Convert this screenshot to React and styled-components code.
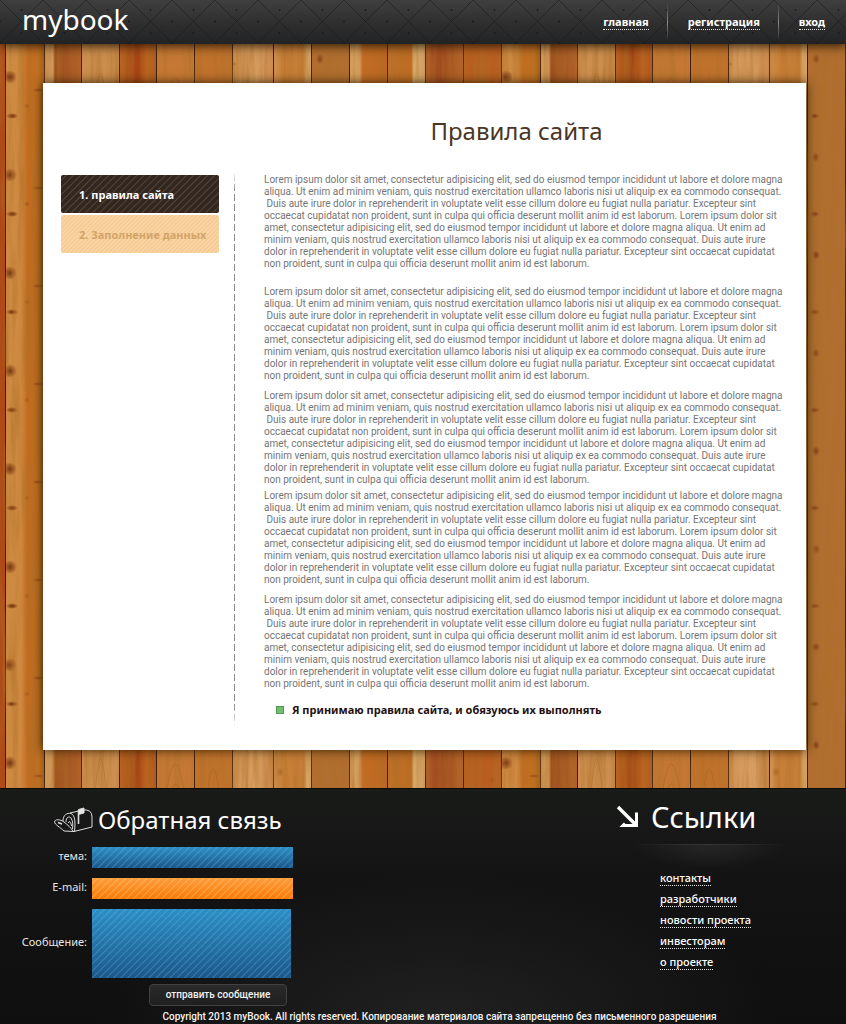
import React from "react";
import styled, { createGlobalStyle } from "styled-components";

const GlobalStyle = createGlobalStyle`
  * { box-sizing: border-box; }
  body {
    margin: 0;
    background: #111212;
    font-family: "Noto Sans", "Open Sans", sans-serif;
    font-size: 11px;
  }
`;

const Page = styled.div`
  display: flex;
  flex-direction: column;
  min-height: 100vh;
`;

const Backdrop = styled.svg`
  position: absolute;
  inset: 0;
  width: 100%;
  height: 100%;
  z-index: -1;
`;

/* ---------- header ---------- */

const Header = styled.header`
  position: relative;
  z-index: 2;
  isolation: isolate;
  display: flex;
  justify-content: space-between;
  align-items: center;
  height: 44px;
  padding: 0 21px 0 22px;
  background: linear-gradient(#403f40, #2e2e2f 55%, #222324);
  box-shadow: 0 2px 10px rgba(20, 10, 0, 0.85);
`;

const Logo = styled.a`
  color: #fff;
  font-size: 28px;
  line-height: 36px;
  padding-bottom: 6px;
  text-decoration: none;
`;

const Nav = styled.nav`
  display: flex;
  align-items: center;
`;

const NavDivider = styled.span`
  width: 1px;
  height: 38px;
  margin: 0 20px 0 18px;
  background: linear-gradient(transparent, #8a8a8a 50%, transparent);
`;

const DottedLink = styled.a`
  display: inline-block;
  color: #fff;
  font-weight: ${(p) => (p.$bold ? 700 : 500)};
  line-height: 14px;
  text-decoration: none;
  border-bottom: 1px dotted #e4e4e4;
`;

/* ---------- content ---------- */

const Main = styled.main`
  position: relative;
  isolation: isolate;
  flex: 1;
  padding: 39px 40px 37px 43px;
`;

const Paper = styled.section`
  display: grid;
  grid-template-columns: 158px 1px 1fr;
  column-gap: 15px;
  padding: 31px 18px 22px;
  background: #fff;
  box-shadow: 0 0 10px rgba(40, 22, 0, 0.9);
`;

const Title = styled.h1`
  grid-column: 3;
  margin: 0 0 23px;
  padding-right: 5px;
  color: #4b3626;
  font-size: 24px;
  font-weight: 400;
  line-height: 34px;
  text-align: center;
`;

const Steps = styled.nav`
  grid-column: 1;
  display: flex;
  flex-direction: column;
  gap: 2px;
  padding-top: 4px;
`;

const Step = styled.a`
  display: flex;
  align-items: center;
  height: 38px;
  padding: 0 0 0 18px;
  border-radius: 2px;
  font-weight: 700;
  text-decoration: none;
  color: ${(p) => (p.$active ? "#fff" : "#d3a468")};
  background: ${(p) =>
    p.$active
      ? "repeating-linear-gradient(135deg, #33261f 0 3px, #53463c 4px, #33261f 5px)"
      : "repeating-linear-gradient(135deg, #f6cb94 0 1px, #fad9ad 2px, #f6cb94 3px)"};
`;

const DashedRule = styled.div`
  grid-column: 2;
  background: repeating-linear-gradient(transparent 0 3px, #8b8b8b 3px 10px);
  mask-image: linear-gradient(transparent, #000 20px calc(100% - 24px), transparent);
`;

const Rules = styled.div`
  grid-column: 3;
  padding: 3px 0 10px 14px;
`;

const Paragraph = styled.p`
  margin: 0 0 ${(p) => p.$gap}px;
  color: #757575;
  font-family: Roboto, "Liberation Sans", sans-serif;
  font-size: 10px;
  line-height: 12px;
  white-space: pre;
`;

const Agree = styled.label`
  display: flex;
  align-items: center;
  gap: 8px;
  padding-left: 12px;
  color: #24100f;
  font-weight: 700;
  line-height: 16px;
`;

const AgreeBox = styled.input`
  appearance: none;
  width: 8px;
  height: 8px;
  margin: 0;
  background: #6fbd6f;
  border: 1px solid #559657;
`;

/* ---------- footer ---------- */

const Footer = styled.footer`
  position: relative;
  padding: 16px 0 0;
  color: #e6e6e6;
  background:
    radial-gradient(ellipse 340px 150px at 52% 100%, #212121, transparent),
    linear-gradient(#191b19, #131313 40%, #0f0f0f);
  border-top: 1px solid #0b0c0b;
`;

const FooterColumns = styled.div`
  display: flex;
  justify-content: space-between;
`;

const FeedbackForm = styled.form`
  width: 293px;
`;

const FeedbackTitle = styled.h2`
  display: flex;
  align-items: center;
  gap: 4px;
  margin: 0 0 12px;
  padding-left: 54px;
  color: #fff;
  font-size: 24px;
  font-weight: 400;
  line-height: 30px;
  white-space: nowrap;
`;

const Fields = styled.div`
  display: grid;
  grid-template-columns: 87px 1fr;
  align-items: center;
  gap: 10px 5px;
`;

const FieldLabel = styled.label`
  padding-bottom: 4px;
  text-align: right;
  line-height: 16px;
`;

const blueFill = `
  repeating-linear-gradient(135deg, transparent 0 3px, rgba(130, 200, 235, 0.3) 4px, transparent 5px),
  linear-gradient(#2d8fc6, #1b588a)`;
const orangeFill = `
  repeating-linear-gradient(135deg, transparent 0 3px, rgba(255, 215, 150, 0.4) 4px, transparent 5px),
  linear-gradient(#ff9d3c, #fb7a06)`;

const Field = styled.input`
  width: 100%;
  height: 21px;
  padding: 0 6px;
  border: 0;
  color: #fff;
  font: inherit;
  background: ${(p) => (p.$tone === "orange" ? orangeFill : blueFill)};
`;

const MessageField = styled(Field)`
  display: block;
  width: calc(100% - 2px);
  height: 69px;
  padding: 6px;
  resize: none;
`;

const SubmitButton = styled.button`
  display: block;
  width: 138px;
  height: 22px;
  margin: 6px 6px 0 auto;
  padding: 0;
  color: #f2f2f2;
  font: 500 10px/16px Roboto, "Liberation Sans", sans-serif;
  background: linear-gradient(#2a2a2b, #1f1f20);
  border: 1px solid #424244;
  border-radius: 4px;
`;

const LinksColumn = styled.section`
  width: 230px;
`;

const LinksTitle = styled.h2`
  display: flex;
  align-items: center;
  gap: 11px;
  margin: 0;
  color: #fff;
  font-size: 29px;
  font-weight: 400;
  line-height: 22px;
`;

const Glow = styled.div`
  width: 152px;
  height: 24px;
  margin: 15px 0 0 17px;
  background:
    linear-gradient(90deg, transparent, #363636 50%, transparent) top / 100% 1px no-repeat,
    radial-gradient(ellipse 50% 100% at 50% 0, #272727, transparent);
`;

const LinkList = styled.ul`
  margin: 0;
  padding: 0 0 0 44px;
  list-style: none;
`;

const LinkItem = styled.li`
  display: flex;
  align-items: center;
  height: 21px;
`;

const Copyright = styled.p`
  margin: 4px 0 0;
  padding-left: 33px;
  color: #f2f2f2;
  font: 500 10px/14px Roboto, "Liberation Sans", sans-serif;
  text-align: center;
`;

/* ---------- drawings ---------- */

/* x, width, gradient id or colour */
const planks = [
  [0, 39, "url(#knotty)"],
  [39, 37, "url(#lightLeftDark)"],
  [76, 38, "#cd8f50"],
  [114, 37, "url(#redwood)"],
  [151, 38, "#c47834"],
  [189, 38, "#c0722c"],
  [227, 41, "url(#pale)"],
  [268, 38, "url(#lightRight)"],
  [306, 38, "#b06e30"],
  [344, 38, "url(#lightLeft)"],
  [382, 38, "url(#stripeRight)"],
  [420, 38, "url(#umber)"],
  [458, 38, "#b85e20"],
];

/* x, y, rx, ry, opacity */
const knots = [
  [5, 33, 7, 7, 0.8],
  [7, 72, 6, 3, 0.9],
  [33, 46, 6, 2, 0.5],
  [22, 62, 3, 3, 0.3],
  [147, 60, 2, 4, 0.3],
  [229, 20, 3, 2, 0.3],
  [275, 42, 4, 5, 0.3],
  [315, 15, 4, 5, 0.6],
  [314, 72, 5, 3, 0.6],
  [487, 50, 2, 3, 0.3],
];

function Gradient({ id, stops }) {
  return (
    <linearGradient id={id}>
      {stops.map(([offset, color]) => (
        <stop key={offset} offset={offset} stopColor={color} />
      ))}
    </linearGradient>
  );
}

function WoodBackdrop() {
  return (
    <Backdrop aria-hidden="true">
      <defs>
        <Gradient id="knotty" stops={[[0, "#cd8a44"], [0.4, "#cf8a40"], [0.58, "#c26c22"], [0.85, "#c0701f"], [1, "#a35c1a"]]} />
        <Gradient id="lightLeftDark" stops={[[0, "#cf985a"], [0.24, "#cf985a"], [0.3, "#9c4f1d"], [1, "#b0602a"]]} />
        <Gradient id="redwood" stops={[[0, "#b96521"], [0.5, "#a54414"], [0.75, "#bb6320"], [1, "#ad5a1f"]]} />
        <Gradient id="pale" stops={[[0, "#cc8e50"], [0.5, "#daa266"], [1, "#cc8a4e"]]} />
        <Gradient id="lightRight" stops={[[0, "#d49555"], [0.3, "#c87e35"], [0.8, "#c67e38"], [0.9, "#daa868"], [1, "#d6a468"]]} />
        <Gradient id="lightLeft" stops={[[0, "#d39e5c"], [0.28, "#d39e5c"], [0.36, "#c26c24"], [1, "#be6720"]]} />
        <Gradient id="stripeRight" stops={[[0, "#be702a"], [0.64, "#be6c22"], [0.7, "#d8aa68"], [1, "#d0a064"]]} />
        <Gradient id="umber" stops={[[0, "#ac582a"], [0.4, "#a04a1e"], [1, "#b3602a"]]} />
        <radialGradient id="knot">
          <stop offset="0" stopColor="#5a2008" />
          <stop offset="0.5" stopColor="#7c3410" stopOpacity="0.7" />
          <stop offset="1" stopColor="#7c3410" stopOpacity="0" />
        </radialGradient>
        <pattern id="wood" x="5" y="0" width="496" height="98" patternUnits="userSpaceOnUse">
          {planks.map(([x, width, fill]) => (
            <rect key={x} x={x} width={width} height="98" fill={fill} />
          ))}
          <path
            d="M157 98Q170 -30 184 98M161 98Q170 10 180 98M165 98Q170 40 176 98M88 98Q95 -40 104 98M92 98Q96 20 100 98M199 98Q208 -20 218 98"
            fill="none"
            stroke="#8f4c18"
            strokeOpacity="0.3"
          />
          {knots.map(([x, y, rx, ry, opacity]) => (
            <ellipse key={`${x}-${y}`} cx={x} cy={y} rx={rx} ry={ry} fill="url(#knot)" opacity={opacity} />
          ))}
          {planks.map(([x]) => (
            <rect key={x} x={x} width="1" height="98" fill="#3d1e0a" />
          ))}
        </pattern>
        <filter id="grain" x="0" y="0" width="100%" height="100%">
          <feTurbulence type="fractalNoise" baseFrequency="0.16 0.012" numOctaves="3" seed="4" />
          <feColorMatrix values="0 0 0 0 0.42  0 0 0 0 0.16  0 0 0 0 0.02  1.2 0 0 0 -0.45" />
        </filter>
      </defs>
      <rect width="100%" height="100%" fill="url(#wood)" />
      <rect width="5" height="100%" fill="#a93c10" fillOpacity="0.6" />
      <rect width="100%" height="100%" filter="url(#grain)" />
    </Backdrop>
  );
}

function HeaderBackdrop() {
  return (
    <Backdrop aria-hidden="true">
      <defs>
        <pattern id="lattice" width="43" height="43" patternUnits="userSpaceOnUse">
          <path d="M0 0L43 43M43 0L0 43" stroke="#1a1a1b" strokeOpacity="0.6" />
          <g fill="#151516" fillOpacity="0.8">
            <circle cx="21.5" cy="10" r="1" />
            <circle cx="21.5" cy="33" r="1" />
            <circle cx="0" cy="21.5" r="1" />
            <circle cx="43" cy="21.5" r="1" />
          </g>
        </pattern>
      </defs>
      <rect width="100%" height="100%" fill="url(#lattice)" />
    </Backdrop>
  );
}

function MailboxIcon() {
  return (
    <svg width="40" height="26" viewBox="0 0 40 26" fill="none" stroke="#dcdcdc" strokeWidth="1" aria-hidden="true">
      <path d="M16 6L29 3Q38 2 38 10V20L20 24.5" />
      <path d="M9 14C9 8 13 5.500 17 6.500C21 8 21.500 15 20.500 24.500" />
      <path d="M12 15C12 10 15 9 17 11C19 14 19 18 18.500 22M14.500 16C15 13 17 15 17.500 19" />
      <path d="M20.500 24.500L10 24C6 20 1 18 .6 15C.6 12 6 12 10 15C14 18 17 21 19 24" />
      <path d="M4 15.500L8 17" strokeWidth="1.6" />
      <path d="M24.500 17V3" strokeWidth="1.6" />
      <path d="M24.500 2.500L30 1V6L24.500 7.500Z" fill="#e8e8e8" />
    </svg>
  );
}

function ArrowIcon() {
  return (
    <svg width="24" height="24" viewBox="0 0 24 24" fill="none" stroke="#fff" aria-hidden="true">
      <path d="M2 2L20 20" strokeWidth="3.4" />
      <path d="M20.500 7.500L20.500 20.500H7L9 18.500" strokeWidth="3" />
    </svg>
  );
}

/* ---------- data ---------- */

const lorem = `Lorem ipsum dolor sit amet, consectetur adipisicing elit, sed do eiusmod tempor incididunt ut labore et dolore magna
aliqua. Ut enim ad minim veniam, quis nostrud exercitation ullamco laboris nisi ut aliquip ex ea commodo consequat.
 Duis aute irure dolor in reprehenderit in voluptate velit esse cillum dolore eu fugiat nulla pariatur. Excepteur sint
occaecat cupidatat non proident, sunt in culpa qui officia deserunt mollit anim id est laborum. Lorem ipsum dolor sit
amet, consectetur adipisicing elit, sed do eiusmod tempor incididunt ut labore et dolore magna aliqua. Ut enim ad
minim veniam, quis nostrud exercitation ullamco laboris nisi ut aliquip ex ea commodo consequat. Duis aute irure
dolor in reprehenderit in voluptate velit esse cillum dolore eu fugiat nulla pariatur. Excepteur sint occaecat cupidatat
non proident, sunt in culpa qui officia deserunt mollit anim id est laborum.`;

const paragraphGaps = [16, 8, 4, 8, 12];
const navItems = ["главная", "регистрация", "вход"];
const footerLinks = ["контакты", "разработчики", "новости проекта", "инвесторам", "о проекте"];

export default function App() {
  return (
    <Page>
      <GlobalStyle />
      <Header>
        <HeaderBackdrop />
        <Logo href="#home">mybook</Logo>
        <Nav aria-label="Главное меню">
          {navItems.map((item, i) => (
            <React.Fragment key={item}>
              {i > 0 && <NavDivider />}
              <DottedLink href="#" $bold>{item}</DottedLink>
            </React.Fragment>
          ))}
        </Nav>
      </Header>

      <Main>
        <WoodBackdrop />
        <Paper>
          <Title>Правила сайта</Title>
          <Steps aria-label="Шаги регистрации">
            <Step href="#rules" $active>1. правила сайта</Step>
            <Step href="#data">2. Заполнение данных</Step>
          </Steps>
          <DashedRule />
          <Rules>
            {paragraphGaps.map((gap, i) => (
              <Paragraph key={i} $gap={gap}>{lorem}</Paragraph>
            ))}
            <Agree>
              <AgreeBox type="checkbox" defaultChecked />
              Я принимаю правила сайта, и обязуюсь их выполнять
            </Agree>
          </Rules>
        </Paper>
      </Main>

      <Footer>
        <FooterColumns>
          <FeedbackForm onSubmit={(e) => e.preventDefault()}>
            <FeedbackTitle><MailboxIcon />Обратная связь</FeedbackTitle>
            <Fields>
              <FieldLabel htmlFor="subject">тема:</FieldLabel>
              <Field id="subject" type="text" />
              <FieldLabel htmlFor="email">E-mail:</FieldLabel>
              <Field id="email" type="email" $tone="orange" />
              <FieldLabel htmlFor="message">Сообщение:</FieldLabel>
              <MessageField as="textarea" id="message" />
            </Fields>
            <SubmitButton type="submit">отправить сообщение</SubmitButton>
          </FeedbackForm>
          <LinksColumn>
            <LinksTitle><ArrowIcon />Ссылки</LinksTitle>
            <Glow />
            <LinkList>
              {footerLinks.map((item) => (
                <LinkItem key={item}><DottedLink href="#">{item}</DottedLink></LinkItem>
              ))}
            </LinkList>
          </LinksColumn>
        </FooterColumns>
        <Copyright>
          Copyright 2013 myBook. All rights reserved. Копирование материалов сайта запрещенно без письменного разрешения
        </Copyright>
      </Footer>
    </Page>
  );
}
